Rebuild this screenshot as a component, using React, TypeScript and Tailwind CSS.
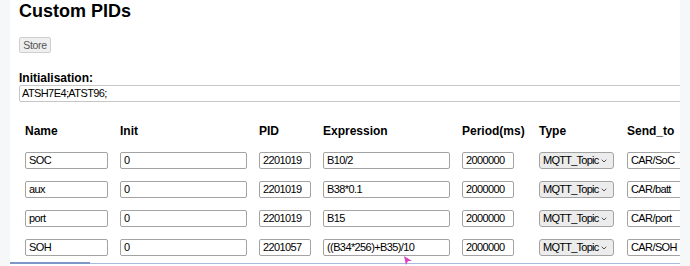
import { ChevronDown } from "lucide-react";

const rows = [
  { name: "SOC", init: "0", pid: "2201019", expr: "B10/2", period: "2000000", send: "CAR/SoC" },
  { name: "aux", init: "0", pid: "2201019", expr: "B38*0.1", period: "2000000", send: "CAR/batt" },
  { name: "port", init: "0", pid: "2201019", expr: "B15", period: "2000000", send: "CAR/port" },
  { name: "SOH", init: "0", pid: "2201057", expr: "((B34*256)+B35)/10", period: "2000000", send: "CAR/SOH" },
];

const cols = "grid grid-cols-[95px_139px_64px_139px_77px_88px_90px]";

const Field = ({ value, w }: { value: string; w: string }) => (
  <div
    className={`${w} h-[17px] border border-[#a3a3a3] rounded-[2px] bg-white px-[3px] text-[11px] leading-[15px] tracking-[-0.6px] text-black whitespace-nowrap overflow-hidden`}
  >
    {value}
  </div>
);

export default function App() {
  return (
    <div className="w-[690px] h-[266px] flex bg-[#f6f7f9] font-['Liberation_Sans',Arial,sans-serif] overflow-hidden">
      <div className="w-[10px] shrink-0" />
      <div className="w-[670px] shrink-0 bg-white relative overflow-hidden flex flex-col">
        <div className="pl-[9px]">
          <h1 className="text-[18px] leading-[22px] font-bold text-black">Custom PIDs</h1>
          <button className="mt-[15px] h-[16px] w-[32px] border border-[#cfcfcf] rounded-[2px] bg-[#efefef] text-[10.5px] leading-[14px] text-[#555] tracking-[-0.3px]">
            Store
          </button>
          <div className="mt-[15px] text-[12px] leading-[14px] font-bold text-black">Initialisation:</div>
          <div className="w-[700px] h-[17px] border border-[#c6c6c6] rounded-[2px] px-[2px] text-[11px] leading-[15px] tracking-[-0.6px] text-black">
            ATSH7E4;ATST96;
          </div>
        </div>

        <div className="pl-[15px] mt-[22px]">
          <div className={`${cols} text-[12px] leading-[14px] font-bold text-black`}>
            <div>Name</div>
            <div>Init</div>
            <div>PID</div>
            <div>Expression</div>
            <div className="whitespace-nowrap">Period(ms)</div>
            <div>Type</div>
            <div className="whitespace-nowrap">Send_to</div>
          </div>
          <div className="mt-[14px] flex flex-col gap-[12px]">
            {rows.map((r) => (
              <div key={r.name} className={cols}>
                <Field value={r.name} w="w-[83px]" />
                <Field value={r.init} w="w-[127px]" />
                <Field value={r.pid} w="w-[52px]" />
                <Field value={r.expr} w="w-[127px]" />
                <Field value={r.period} w="w-[52px]" />
                <div className="w-[75px] h-[17px] border border-[#a3a3a3] rounded-[3px] bg-[#ececec] pl-[3px] pr-[5px] flex items-center justify-between text-[11px] tracking-[-0.75px] text-black">
                  <span>MQTT_Topic</span>
                  <ChevronDown size={8} strokeWidth={2.5} className="text-[#333]" />
                </div>
                <Field value={r.send} w="w-[90px]" />
              </div>
            ))}
          </div>
        </div>

        <div className="absolute left-0 right-0 top-[262px] flex">
          <div className="w-[80px] h-[2px] bg-[#7d97c8]" />
          <div className="flex-1 h-[1px] mt-[1px] bg-[#a8bbdf]" />
        </div>
        <svg className="absolute left-[394px] top-[256px]" width="9" height="9" viewBox="0 0 9 9">
          <polygon points="0,0 8,5 4,5 2,9" fill="#e23fbf" />
        </svg>
      </div>
      <div className="w-[10px] shrink-0" />
    </div>
  );
}
